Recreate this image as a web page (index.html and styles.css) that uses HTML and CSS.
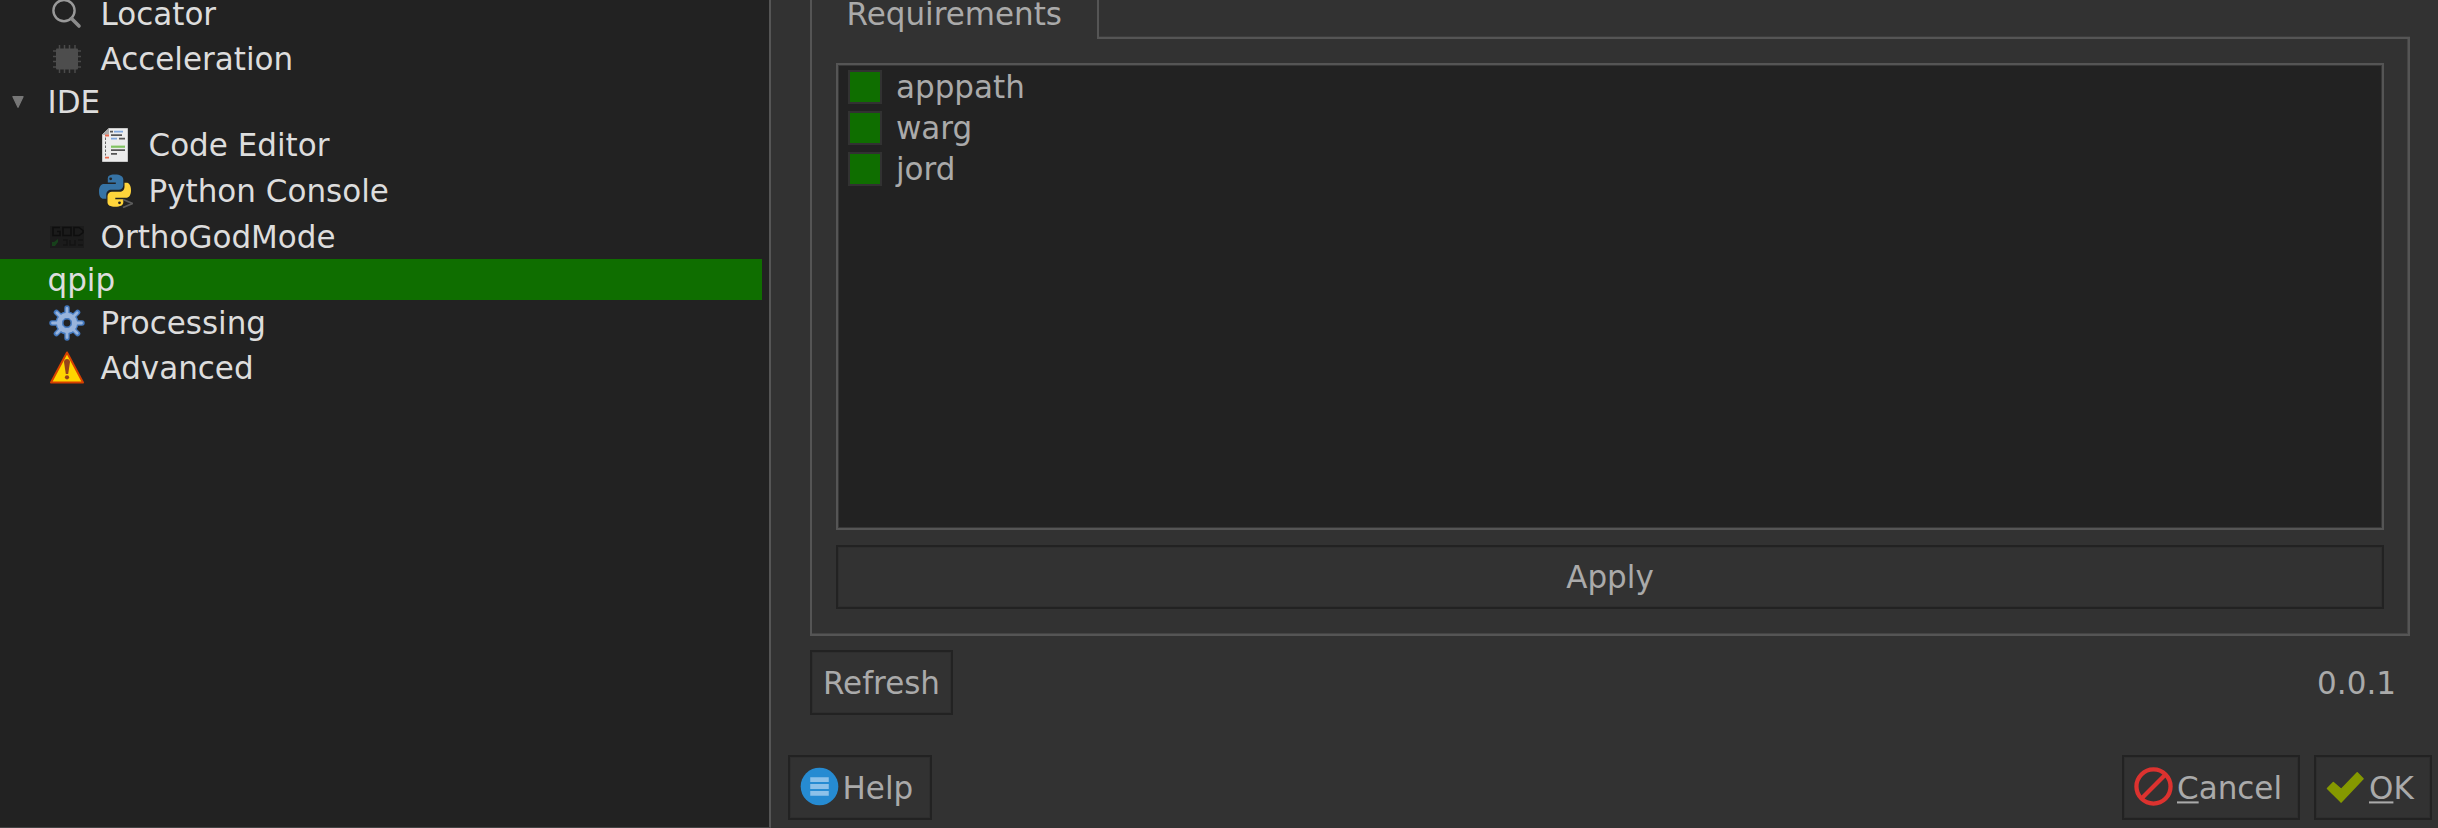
FILE: index.html
```
<!DOCTYPE html>
<html lang="en">
<head>
<meta charset="utf-8">
<title>Options</title>
<link rel="stylesheet" href="styles.css">
</head>
<body>
<div class="window">
  <nav class="sidebar">
    <div class="row icon-row">
      <svg class="icon" viewBox="0 0 36 36"><circle cx="15" cy="14.600" r="10.600" fill="none" stroke="#999" stroke-width="2.400"/><path d="M22.500 22.500L30 30" stroke="#8c8c8c" stroke-width="3.600" stroke-linecap="round"/></svg>
      <span>Locator</span>
    </div>
    <div class="row icon-row">
      <svg class="icon" viewBox="0 0 36 36"><path d="M10.500 4v28M15.500 4v28M20.500 4v28M26 4v28M4 10h28M4 15.500h28M4 20.500h28M4 26h28" stroke="#4a4a4a" stroke-width="1.500"/><rect x="7" y="7.500" width="22" height="21" rx="1" fill="#4d4d4d"/></svg>
      <span>Acceleration</span>
    </div>
    <div class="row group">
      <svg class="arrow" viewBox="0 0 12 12"><path d="M1 .7h10L6 11.200z" fill="#777" stroke="#777" stroke-width="1.300" stroke-linejoin="round"/></svg>
      <span>IDE</span>
    </div>
    <div class="row icon-row child">
      <svg class="icon" viewBox="0 0 36 36">
        <path d="M5.500 7.500L12 1.500H30.500V34.500H5.500z" fill="#ececec" stroke="#c8c8c8"/>
        <path d="M5 8l7-7v6.500z" fill="#aaa"/>
        <g stroke-width="1.800" fill="none">
          <path d="M13 4.600h3M14 8.200h11M22 11.700h6M14 23.200h14M14 26.800h6" stroke="#555"/>
          <path d="M17 4.600h9M14 11.700h6" stroke="#7fa6dc"/>
          <path d="M14 19.700h14" stroke="#80c261" stroke-width="2.200"/>
          <path d="M8 8.500h4M8 30.700h4" stroke="#e76a4e"/>
          <path d="M8.500 10.500v18" stroke="#666" stroke-width="1" stroke-dasharray="2.500 1.500"/>
        </g>
      </svg>
      <span>Code Editor</span>
    </div>
    <div class="row icon-row child">
      <svg class="icon" viewBox="0 0 36 36">
        <path d="M17.800 1.500c-7 0-7 2.500-7 5v3h8v1.500H7c-3 0-5 2.500-5 7.500 0 5 2 7.300 4.500 7.300h2.800v-4c0-3 2-5 5-5h7.500c2.500 0 4.500-2 4.500-4.500V6.500c0-3-3-5-8.500-5z" fill="#3673a5"/>
        <path d="M27.500 9.700v4c0 3-2 5-5 5H15c-2.500 0-4.500 2-4.500 4.500v6c0 3 3 4.500 7.800 4.500 5 0 8-1.500 8-4.500v-3h-8v-1.500H29c3 0 5-2.500 5-7.500s-2-7.500-4.500-7.500z" fill="#ffd43b"/>
        <circle cx="13.700" cy="5.800" r="1.400" fill="#222"/><circle cx="22.500" cy="29.800" r="1.400" fill="#222"/>
        <path d="M26 26.500l9.500 4-9.500 4" fill="none" stroke="#5c5c5c" stroke-width="1.800"/>
      </svg>
      <span>Python Console</span>
    </div>
    <div class="row icon-row">
      <svg class="icon" viewBox="0 0 36 36">
        <rect x="1" y="7" width="34" height="22" fill="#1b1b1b"/>
        <path d="M11 8.500H4v8h7v-4H8M14 8.500h8v8h-8zM25 8.500h5l4 3v2l-4 3h-5z" fill="none" stroke="#0e0e0e" stroke-width="1.500"/>
        <path d="M14 21h4v5h-4M21 21v5h5v-5M29 21h5M29 26h5" fill="none" stroke="#141414" stroke-width="1.500"/>
        <path d="M3 27v-4h2l4-3v3l-3 4z" fill="#17401b"/>
      </svg>
      <span>OrthoGodMode</span>
    </div>
    <div class="row group selected"><span>qpip</span></div>
    <div class="row icon-row">
      <svg class="icon" viewBox="0 0 36 36">
        <g stroke-linecap="round" fill="none">
          <path d="M18 3v30M3 18h30M7.400 7.400l21.200 21.200M28.600 7.400L7.400 28.600" stroke="#4379bf" stroke-width="5.400"/>
          <circle cx="18" cy="18" r="8" stroke="#4379bf" stroke-width="7"/>
          <path d="M18 3.500v29M3.500 18h29M7.800 7.800l20.400 20.400M28.200 7.800L7.800 28.200" stroke="#98b4dc" stroke-width="2.800"/>
          <circle cx="18" cy="18" r="7.700" stroke="#98b4dc" stroke-width="5"/>
        </g>
        <circle cx="18" cy="18" r="4.200" fill="#222" stroke="#4379bf" stroke-width="1.500"/>
      </svg>
      <span>Processing</span>
    </div>
    <div class="row icon-row">
      <svg class="icon" viewBox="0 0 36 36">
        <path d="M18 2.500L34 32.500H2z" fill="#ffd500" stroke="#d64000" stroke-width="2" stroke-linejoin="round"/>
        <path d="M15 12c0-4 6-4 6 0L19.200 24h-2.400z" fill="#97431b"/><circle cx="18" cy="27.300" r="2.100" fill="#97431b"/>
      </svg>
      <span>Advanced</span>
    </div>
  </nav>

  <main class="main">
    <section class="page">
      <div class="tabs"><div class="tab"><span>Requirements</span></div><div class="tab-rest"></div></div>
      <div class="panel">
        <div class="list">
          <div class="item"><i class="check"></i><span>apppath</span></div>
          <div class="item"><i class="check"></i><span>warg</span></div>
          <div class="item"><i class="check"></i><span>jord</span></div>
        </div>
        <div class="button apply"><span>Apply</span></div>
      </div>
      <div class="status">
        <div class="button refresh"><span>Refresh</span></div>
        <span class="version">0.0.1</span>
      </div>
    </section>
    <footer class="footer">
      <div class="button help">
        <svg class="button-icon" viewBox="0 0 40 40"><circle cx="20" cy="20" r="19.300" fill="#268bd2"/><path d="M10.500 13h19M10.500 20h19M10.500 27h19" stroke="#8dc1e9" stroke-width="5"/></svg>
        <span>Help</span>
      </div>
      <div class="actions">
        <div class="button cancel">
          <svg class="button-icon" viewBox="0 0 40 40"><circle cx="20" cy="20" r="17.500" fill="none" stroke="#dc322f" stroke-width="4.400"/><path d="M8.500 31.500l23-23" stroke="#dc322f" stroke-width="4.400"/></svg>
          <span><u>C</u>ancel</span>
        </div>
        <div class="button ok">
          <svg class="button-icon" viewBox="0 0 40 40"><path d="M1.500 22l6-6 8 7L32 6l6 6-22.500 24z" fill="#859900" stroke="#859900" stroke-width="1.500" stroke-linejoin="round"/></svg>
          <span><u>O</u>K</span>
        </div>
      </div>
    </footer>
  </main>
</div>
</body>
</html>
```
FILE: styles.css
```
* { box-sizing: border-box; }
body {
  margin: 0;
  background: #323232;
  color: #aaa;
  font: 31px/36px "DejaVu Sans", sans-serif;
}
span { display: block; transform: scaleY(1.03); }
.window { display: flex; width: 2438px; height: 828px; overflow: hidden; }
.sidebar {
  flex: none;
  width: 771px;
  height: 828px;
  background: #222;
  border-right: 2px solid #555;
  border-bottom: 1px solid #444;
  color: #ddd;
  overflow: hidden;
}
.row { display: flex; align-items: center; height: 41px; width: 762px; white-space: pre; }
.icon-row { height: 45px; padding-left: 49px; gap: 15.5px; }
.icon-row:first-child { margin-top: -9px; }
.child { height: 46px; padding-left: 97px; }
.group { position: relative; padding-left: 47.5px; }
.selected { background: #0f6e00; }
.icon { flex: none; width: 36px; height: 36px; }
.arrow { position: absolute; left: 12px; top: 15px; width: 12px; height: 12px; }

.main { flex: 1; display: flex; flex-direction: column; height: 828px; }
.page { padding: 0 28px 0 39px; }
.tabs { display: flex; height: 39px; }
.tab {
  width: 289px;
  height: 39px;
  padding-left: 34.5px;
  line-height: 28px;
  border: solid #555;
  border-width: 0 2px;
}
.tab-rest { flex: 1; border-bottom: 2px solid #555; box-shadow: inset 0 -1px #3c3c3c; }
.panel {
  height: 597px;
  padding: 24px 24px 0;
  border: 2px solid #555;
  border-top: 0;
  box-shadow: inset -1px -1px #444;
}
.list {
  height: 467px;
  padding: 2px 10px;
  background: #222;
  border: 2px solid #555;
  box-shadow: inset 0 0 0 1px #373737;
}
.item { display: flex; align-items: center; gap: 14px; height: 40.8px; }
.check { width: 34px; height: 34px; background: #0f6e00; border: 2px solid #323232; }
.button {
  display: flex;
  align-items: center;
  height: 65px;
  border: 2px solid #222;
  box-shadow: inset 0 0 0 1px #2e2e2e;
  white-space: pre;
}
.apply { height: 64px; margin-top: 15px; justify-content: center; }
.status { display: flex; align-items: flex-start; justify-content: space-between; padding-top: 14px; }
.refresh { width: 143px; justify-content: center; }
.version { padding: 14px 14px 0 0; }
.footer { display: flex; justify-content: space-between; margin-top: 40px; padding: 0 6px 0 17px; }
.actions { display: flex; gap: 14px; }
.help { width: 144px; padding-left: 10px; gap: 3.5px; }
.cancel { width: 178px; padding-left: 10px; gap: 4px; }
.ok { width: 118px; padding-left: 10px; gap: 4px; }
.button-icon { width: 39px; height: 39px; flex: none; margin-top: -2px; }
u { text-decoration-thickness: 2px; text-underline-offset: 2px; }
```
